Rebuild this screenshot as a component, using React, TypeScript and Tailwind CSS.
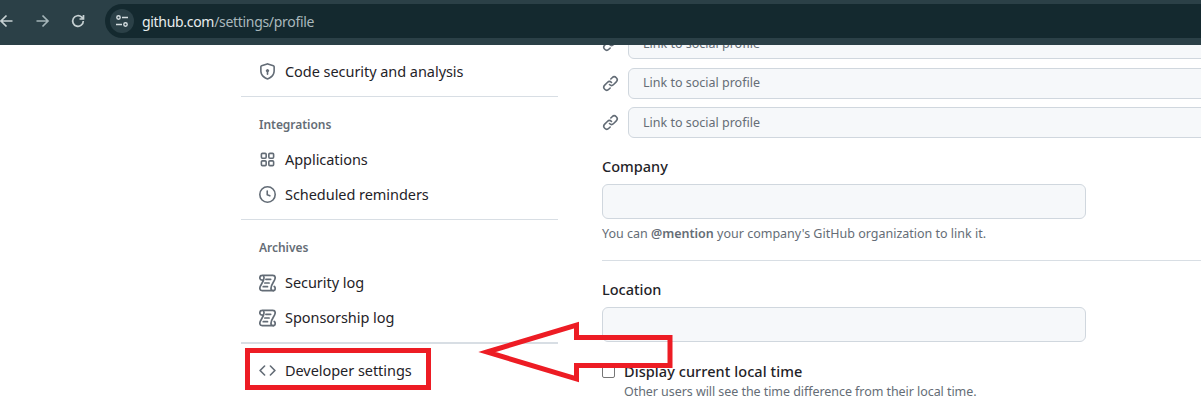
import React from "react";

const P = {
  shield: "M7.467.133a1.748 1.748 0 0 1 1.066 0l5.25 1.68A1.75 1.75 0 0 1 15 3.48V7c0 1.566-.32 3.182-1.303 4.682-.983 1.498-2.585 2.813-5.032 3.855a1.697 1.697 0 0 1-1.33 0c-2.447-1.042-4.049-2.357-5.032-3.855C1.32 10.182 1 8.566 1 7V3.48a1.75 1.75 0 0 1 1.217-1.667Zm.61 1.429a.25.25 0 0 0-.153 0l-5.25 1.68a.25.25 0 0 0-.174.238V7c0 1.358.275 2.666 1.057 3.86.784 1.194 2.121 2.34 4.366 3.297a.196.196 0 0 0 .154 0c2.245-.956 3.582-2.104 4.366-3.298C13.225 9.666 13.5 8.36 13.5 7V3.48a.251.251 0 0 0-.174-.237l-5.25-1.68ZM8.75 8.582v1.918a.75.75 0 0 1-1.5 0V8.582a1.5 1.5 0 1 1 1.5 0Z",
  link: "m7.775 3.275 1.25-1.25a3.5 3.5 0 1 1 4.95 4.95l-2.5 2.5a3.5 3.5 0 0 1-4.95 0 .751.751 0 0 1 .018-1.042.751.751 0 0 1 1.042-.018 1.998 1.998 0 0 0 2.83 0l2.5-2.5a2.002 2.002 0 0 0-2.83-2.83l-1.25 1.25a.751.751 0 0 1-1.042-.018.751.751 0 0 1-.018-1.042Zm-4.69 9.64a1.998 1.998 0 0 0 2.83 0l1.25-1.25a.751.751 0 0 1 1.042.018.751.751 0 0 1 .018 1.042l-1.25 1.25a3.5 3.5 0 1 1-4.95-4.95l2.5-2.5a3.5 3.5 0 0 1 4.95 0 .751.751 0 0 1-.018 1.042.751.751 0 0 1-1.042.018 1.998 1.998 0 0 0-2.83 0l-2.5 2.5a1.998 1.998 0 0 0 0 2.83Z",
  apps: "M1.5 3.25c0-.966.784-1.75 1.75-1.75h2.5c.966 0 1.75.784 1.75 1.75v2.5A1.75 1.75 0 0 1 5.75 7.5h-2.5A1.75 1.75 0 0 1 1.5 5.75Zm7 0c0-.966.784-1.75 1.75-1.75h2.5c.966 0 1.75.784 1.75 1.75v2.5a1.75 1.75 0 0 1-1.75 1.75h-2.5A1.75 1.75 0 0 1 8.5 5.75Zm-7 7c0-.966.784-1.75 1.75-1.75h2.5c.966 0 1.75.784 1.75 1.75v2.5a1.75 1.75 0 0 1-1.75 1.75h-2.5a1.75 1.75 0 0 1-1.75-1.75Zm7 0c0-.966.784-1.75 1.75-1.75h2.5c.966 0 1.75.784 1.75 1.75v2.5a1.75 1.75 0 0 1-1.75 1.75h-2.5a1.75 1.75 0 0 1-1.75-1.75ZM3.25 3a.25.25 0 0 0-.25.25v2.5c0 .138.112.25.25.25h2.5A.25.25 0 0 0 6 5.75v-2.5A.25.25 0 0 0 5.75 3Zm7 0a.25.25 0 0 0-.25.25v2.5c0 .138.112.25.25.25h2.5a.25.25 0 0 0 .25-.25v-2.5a.25.25 0 0 0-.25-.25Zm-7 7a.25.25 0 0 0-.25.25v2.5c0 .138.112.25.25.25h2.5a.25.25 0 0 0 .25-.25v-2.5a.25.25 0 0 0-.25-.25Zm7 0a.25.25 0 0 0-.25.25v2.5c0 .138.112.25.25.25h2.5a.25.25 0 0 0 .25-.25v-2.5a.25.25 0 0 0-.25-.25Z",
  clock: "M8 0a8 8 0 1 1 0 16A8 8 0 0 1 8 0ZM1.5 8a6.5 6.5 0 1 0 13 0 6.5 6.5 0 0 0-13 0Zm7-3.25v2.992l2.028.812a.75.75 0 0 1-.557 1.392l-2.5-1A.751.751 0 0 1 7 8.25v-3.5a.75.75 0 0 1 1.5 0Z",
  code: "m11.28 3.22 4.25 4.25a.75.75 0 0 1 0 1.06l-4.25 4.25a.749.749 0 0 1-1.275-.326.749.749 0 0 1 .215-.734L13.94 8l-3.72-3.72a.749.749 0 0 1 .326-1.275.749.749 0 0 1 .734.215Zm-6.56 0a.751.751 0 0 1 1.042.018.751.751 0 0 1 .018 1.042L2.06 8l3.72 3.72a.749.749 0 0 1-.326 1.275.749.749 0 0 1-.734-.215L.47 8.53a.75.75 0 0 1 0-1.06Z",
};

function Oct({ d, className }: { d: string; className?: string }) {
  return (
    <svg viewBox="0 0 16 16" width="17" height="17" fill="#636c76" className={className}>
      <path d={d} />
    </svg>
  );
}

function LogIcon() {
  return (
    <svg viewBox="0 0 16 16" width="18" height="18" fill="none" stroke="#636c76" strokeWidth="1.6" strokeLinecap="round" strokeLinejoin="round">
      <path d="M3.5 5.25H3C1.7 5.25.75 4.2.75 3S1.7.75 3 .75h10C14.2.75 15.25 1.8 15.25 3c0 3-4 6-4 10 0 1.2 1 2.25 2.25 2.25H3C1.7 15.25.75 14.2.75 13c0-3 4-6 4-10C4.75 2 4 1 3 .75" />
      <path d="M13.5 15.25c1 0 1.75-1 1.75-2.25 0-.7-.3-1.3-.9-1.7" />
      <path d="M6.5 4.5h4.5M5.5 8h4M4 11.5h4" />
    </svg>
  );
}

function Row({ icon, label }: { icon: React.ReactNode; label: string }) {
  return (
    <div className="flex h-[35px] items-center pl-[18px] text-[14.5px] tracking-[-0.05px] text-[#1f2328]">
      <span className="mr-[9px] flex w-[17px] justify-center">{icon}</span>
      <span>{label}</span>
    </div>
  );
}

function Label({ children }: { children: string }) {
  return <div className="flex h-[20px] items-center pl-[18px] text-[12px] font-semibold tracking-[-0.03px] text-[#656d76]">{children}</div>;
}

function Sep() {
  return <div className="h-px bg-[#d8dee4]" />;
}

function LinkRow() {
  return (
    <div className="flex items-center">
      <Oct d={P.link} className="mr-[9px] shrink-0" />
      <div className="flex h-[31px] w-[600px] shrink-0 items-center rounded-md border border-[#d0d7de] bg-[#f6f8fa] pl-[14px] pt-[1px] text-[12.5px] text-[#656d76]">
        Link to social profile
      </div>
    </div>
  );
}

export default function App() {
  return (
    <div className="relative flex h-[405px] w-[1201px] flex-col overflow-hidden bg-white font-['Noto_Sans','Open_Sans',sans-serif]">
      <header className="z-10 flex h-[45px] shrink-0 items-start bg-[#2b4047] pt-[4px]">
        <div className="flex h-[34px] w-[105px] shrink-0 items-center text-[#c6d0d2]">
          <svg width="16" height="16" viewBox="0 0 16 16" fill="none" stroke="currentColor" strokeWidth="1.7" className="ml-[-1px]"><path d="M13.5 8H2M7.5 2.5 2 8l5.5 5.5" /></svg>
          <svg width="16" height="16" viewBox="0 0 16 16" fill="none" stroke="#a4b4b8" strokeWidth="1.7" className="ml-[19px]"><path d="M2.5 8H14M8.5 2.5 14 8l-5.5 5.5" /></svg>
          <svg width="16" height="16" viewBox="0 0 16 16" fill="none" stroke="currentColor" strokeWidth="1.7" className="ml-[20px]"><path d="M13.3 8a5.3 5.3 0 1 1-1.6-3.8L13.5 6M13.5 2v4h-4" /></svg>
        </div>
        <div className="flex h-[34px] flex-1 items-center rounded-l-full bg-[#14292f] pl-[5px]">
          <span className="flex h-[24px] w-[24px] items-center justify-center rounded-full bg-[#2b4047]">
            <svg width="14" height="14" viewBox="0 0 14 14" fill="none" stroke="#d5dde0" strokeWidth="1.4">
              <circle cx="3.5" cy="3.5" r="1.7" />
              <path d="M7 3.5h6M1 10.5h6" />
              <circle cx="10.5" cy="10.5" r="1.7" />
            </svg>
          </span>
          <span className="ml-[8px] text-[14px] tracking-[-0.31px] text-[#e8edee]">
            github.com<span className="text-[#a9b8bc]">/settings/profile</span>
          </span>
        </div>
      </header>

      <div className="flex min-h-0 flex-1 overflow-hidden pl-[241px]">
        <aside className="w-[317px] shrink-0 pt-[9px]">
          <Row icon={<Oct d={P.shield} />} label="Code security and analysis" />
          <div className="mt-[7px]"><Sep /></div>
          <div className="mt-[18px]"><Label>Integrations</Label></div>
          <div className="mt-[7px]">
            <Row icon={<Oct d={P.apps} />} label="Applications" />
            <Row icon={<Oct d={P.clock} />} label="Scheduled reminders" />
          </div>
          <div className="mt-[7px]"><Sep /></div>
          <div className="mt-[18px]"><Label>Archives</Label></div>
          <div className="mt-[7px]">
            <Row icon={<LogIcon />} label="Security log" />
            <Row icon={<LogIcon />} label="Sponsorship log" />
          </div>
          <div className="mt-[7px]"><div className="h-[2px] bg-[#d8dee4]" /></div>
          <div className="mt-[9px]">
            <Row icon={<Oct d={P.code} />} label="Developer settings" />
          </div>
        </aside>

        <main className="ml-[44px] w-[640px] shrink-0">
          <div className="mt-[-17px] flex flex-col gap-[8.5px]">
            <LinkRow />
            <LinkRow />
            <LinkRow />
          </div>
          <h3 className="mt-[18px] text-[14.5px] font-medium leading-[20px] text-[#1f2328]">Company</h3>
          <div className="mt-[8px] h-[35px] w-[484px] rounded-md border border-[#d0d7de] bg-[#f6f8fa]" />
          <p className="mt-[6px] text-[12.5px] leading-[18px] text-[#656d76]">
            You can <strong className="font-semibold">@mention</strong> your company's GitHub organization to link it.
          </p>
          <div className="mt-[17px]"><Sep /></div>
          <h3 className="mt-[18px] text-[14.5px] font-medium leading-[20px] text-[#1f2328]">Location</h3>
          <div className="mt-[8px] h-[35px] w-[484px] rounded-md border border-[#d0d7de] bg-[#f6f8fa]" />
          <div className="mt-[19px] flex items-center">
            <span className="h-[13px] w-[13px] rounded-[2px] border border-[#767676] bg-white" />
            <span className="ml-[9px] text-[14.5px] font-medium leading-[20px] tracking-[0.07px] text-[#1f2328]">Display current local time</span>
          </div>
          <p className="ml-[22px] mt-[2px] text-[12.5px] leading-[18px] tracking-[-0.06px] text-[#656d76]">
            Other users will see the time difference from their local time.
          </p>
        </main>
      </div>

      <div className="pointer-events-none absolute left-[245px] top-[348px] h-[42px] w-[186px] border-[5px] border-[#ed1c24]" />
      <svg className="pointer-events-none absolute left-0 top-0" width="1201" height="405" fill="none">
        <path d="M487 352 576.5 325V337.5H670V365.5H576.5V379Z" stroke="#ed1c24" strokeWidth="5" strokeLinejoin="miter" strokeMiterlimit="10" />
      </svg>
    </div>
  );
}
